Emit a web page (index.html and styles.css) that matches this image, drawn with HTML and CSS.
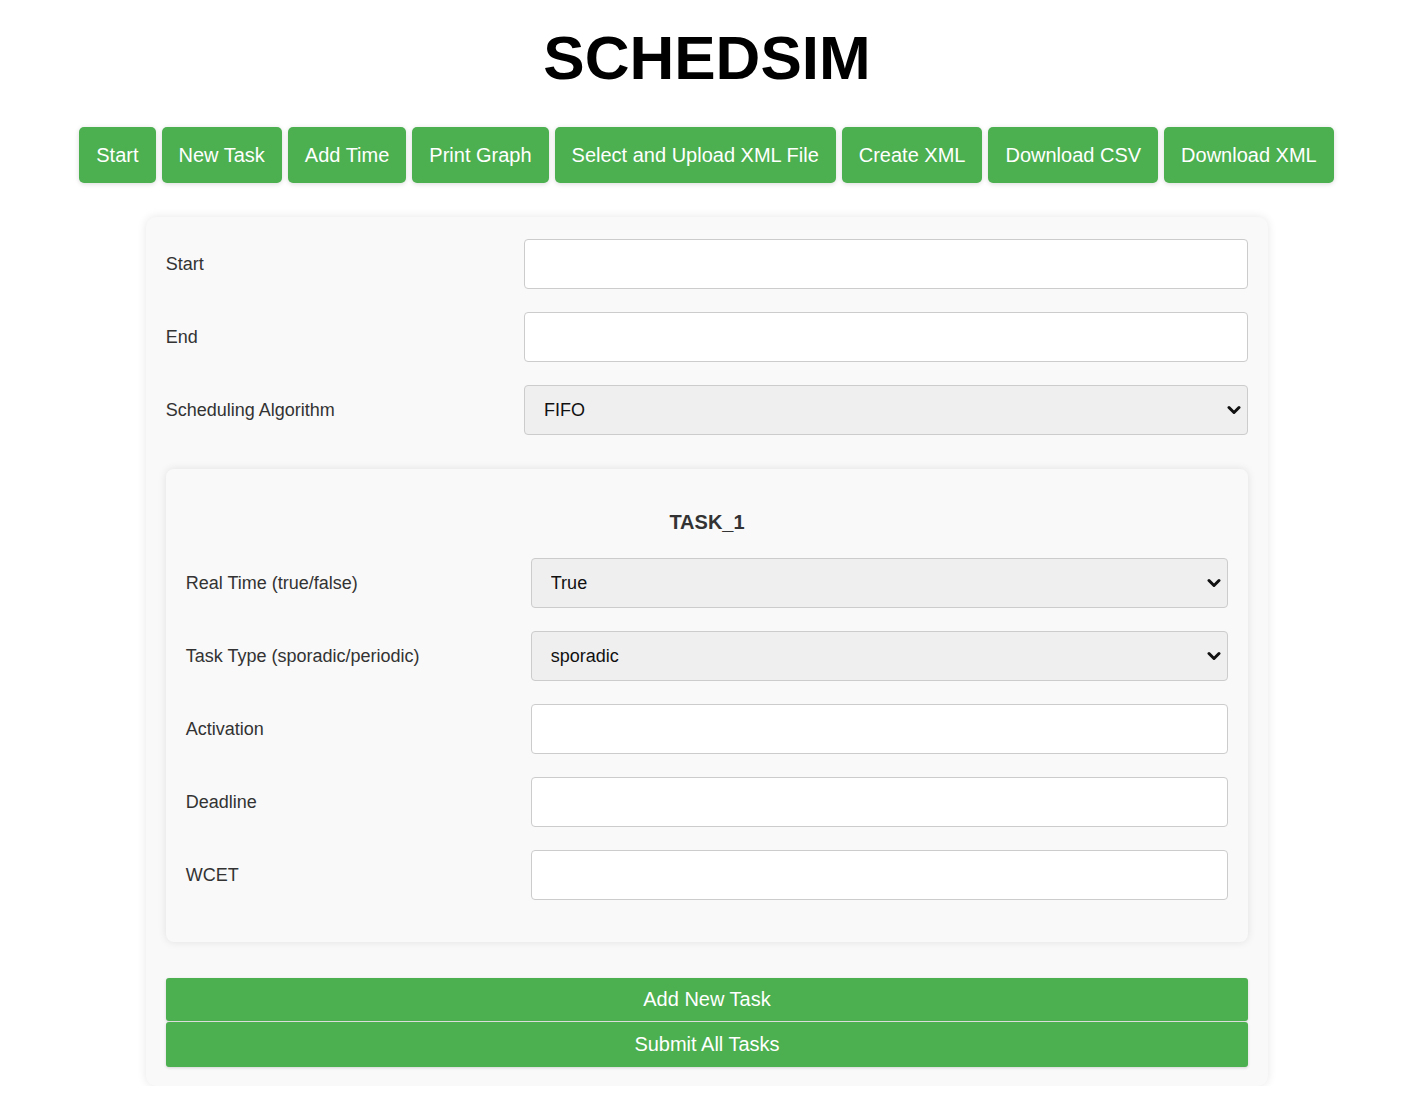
FILE: index.html
```html
<!DOCTYPE html>
<html lang="en">
<head>
<meta charset="utf-8">
<title>SCHEDSIM</title>
<link rel="stylesheet" href="styles.css">
</head>
<body>
<h1 class="title">SCHEDSIM</h1>
<nav class="toolbar">
  <button class="tool-btn">Start</button>
  <button class="tool-btn">New Task</button>
  <button class="tool-btn">Add Time</button>
  <button class="tool-btn">Print Graph</button>
  <button class="tool-btn">Select and Upload XML File</button>
  <button class="tool-btn">Create XML</button>
  <button class="tool-btn">Download CSV</button>
  <button class="tool-btn">Download XML</button>
</nav>
<form class="card">
  <div class="row">
    <label class="label">Start</label>
    <input class="field" type="text">
  </div>
  <div class="row">
    <label class="label">End</label>
    <input class="field" type="text">
  </div>
  <div class="row">
    <label class="label">Scheduling Algorithm</label>
    <select class="field select"><option>FIFO</option></select>
  </div>

  <section class="task">
    <h3 class="task-title">TASK_1</h3>
    <div class="row">
      <label class="label">Real Time (true/false)</label>
      <select class="field select"><option>True</option></select>
    </div>
    <div class="row">
      <label class="label">Task Type (sporadic/periodic)</label>
      <select class="field select"><option>sporadic</option></select>
    </div>
    <div class="row">
      <label class="label">Activation</label>
      <input class="field" type="text">
    </div>
    <div class="row">
      <label class="label">Deadline</label>
      <input class="field" type="text">
    </div>
    <div class="row">
      <label class="label">WCET</label>
      <input class="field" type="text">
    </div>
  </section>

  <button type="button" class="wide-btn">Add New Task</button>
  <button type="button" class="wide-btn second">Submit All Tasks</button>
</form>
</body>
</html>
```

FILE: styles.css
```css
body {
  margin: 8px 13px 8px 8px;
  background: #ffffff;
  font-family: "Liberation Sans", Arial, sans-serif;
  color: #333;
}

.title {
  margin: 14px 0 0;
  text-align: center;
  font-size: 62px;
  line-height: 72px;
  font-weight: bold;
  color: #000;
}

.toolbar {
  display: flex;
  justify-content: center;
  gap: 6px;
  margin: 33px 0 0;
  padding-left: 1px;
  padding-right: 2px;
}

.tool-btn {
  background: #4caf50;
  color: #fff;
  border: none;
  border-radius: 5px;
  padding: 0 17px;
  height: 56px;
  font-family: "Liberation Sans", Arial, sans-serif;
  font-size: 20px;
  box-shadow: 0 1px 5px rgba(0, 0, 0, 0.15);
  cursor: pointer;
}

.card {
  width: 80.3%;
  margin: 34px auto 0;
  box-sizing: border-box;
  padding: 22px 20px 19px;
  background: #f9f9f9;
  border-radius: 10px;
  box-shadow: 0 0 10px rgba(0, 0, 0, 0.1);
  display: flex;
  flex-direction: column;
}

.row {
  display: flex;
  align-items: center;
  margin-bottom: 23px;
}

.label {
  flex: 0 0 33.1%;
  font-size: 18px;
  color: #333;
}

.field {
  flex: 1;
  min-width: 0;
  height: 50px;
  box-sizing: border-box;
  border: 1px solid #ccc;
  border-radius: 4px;
  background: #fff;
  padding: 0 15px;
  font-family: "Liberation Sans", Arial, sans-serif;
  font-size: 18px;
  color: #111;
}

.select {
  -webkit-appearance: none;
  appearance: none;
  padding-left: 19px;
  background-color: #efefef;
  background-image: url("data:image/svg+xml;utf8,<svg xmlns='http://www.w3.org/2000/svg' width='14' height='10' viewBox='0 0 14 10'><path d='M2 2.5 L7 7.5 L12 2.5' fill='none' stroke='%23111' stroke-width='3' stroke-linecap='round' stroke-linejoin='round'/></svg>");
  background-repeat: no-repeat;
  background-position: right 6px center;
  background-size: 14px 10px;
}

.task {
  margin: 11px 0 36px;
  padding: 20px 20px 19px;
  background: #f9f9f9;
  border-radius: 8px;
  box-shadow: 0 0 8px rgba(0, 0, 0, 0.1);
}

.task-title {
  margin: 22px 0 24px;
  text-align: center;
  font-size: 20px;
  line-height: 23px;
  font-weight: bold;
  color: #333;
}

.wide-btn {
  display: block;
  width: 100%;
  background: #4caf50;
  color: #fff;
  border: none;
  border-radius: 3px;
  padding: 10px 0;
  font-family: "Liberation Sans", Arial, sans-serif;
  font-size: 20px;
  line-height: 23px;
  box-shadow: 0 1px 3px rgba(0, 0, 0, 0.15);
  cursor: pointer;
}

.wide-btn.second {
  margin-top: 1px;
  padding: 11px 0;
}
```
